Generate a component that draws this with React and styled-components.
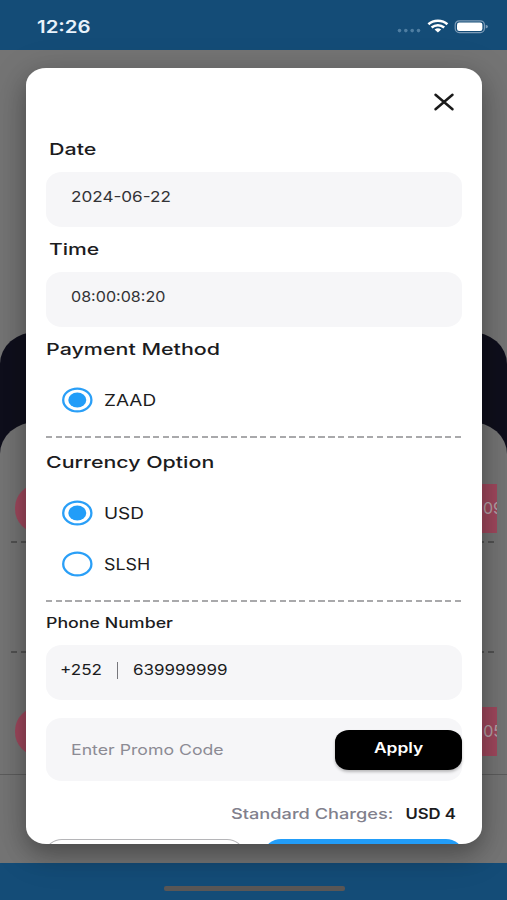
import styled, { createGlobalStyle } from 'styled-components';
import { useState } from 'react';

const GlobalStyle = createGlobalStyle`
  * {
    box-sizing: border-box;
  }
  body {
    margin: 0;
    font-family: Inter, 'Liberation Sans', sans-serif;
  }
`;

const Screen = styled.div`
  display: grid;
  width: 507px;
  height: 900px;
  overflow: hidden;
  background: #747474;
`;

const Page = styled.div`
  grid-area: 1 / 1;
  display: flex;
  flex-direction: column;
  height: 900px;
`;

const StatusBar = styled.header`
  display: flex;
  align-items: center;
  justify-content: space-between;
  flex: none;
  height: 50px;
  padding: 3px 18px 0 37px;
  background: #144c77;
`;

const StatusIcons = styled.div`
  display: flex;
`;

const Hero = styled.div`
  flex: none;
  height: 282px;
`;

const Panel = styled.div`
  flex: 1;
  padding-top: 90px;
  border-radius: 36px 36px 0 0 / 32px 32px 0 0;
  background: #0f0f1c;
`;

const Sheet = styled.div`
  display: flex;
  flex-direction: column;
  height: 441px;
  padding-top: 62px;
  border-radius: 36px 36px 0 0 / 32px 32px 0 0;
  background: #747474;
`;

const Slot = styled.div`
  display: flex;
  align-items: center;
  justify-content: flex-end;
  flex: none;
  height: 49px;
  margin: 0 10px 0 15px;
  padding-bottom: 2px;
  overflow: hidden;
  border-radius: 24px 0 0 24px;
  background: #9f485d;
  color: #b4a3a8;
  font-size: 16px;
`;

const SlotTime = styled.span`
  margin-right: -6px;
`;

const Gap = styled.div`
  flex: none;
  height: ${(p) => p.$height}px;
`;

const SheetLine = styled.div`
  flex: none;
  height: 1px;
  background: #5c5c5c;
`;

const BottomBar = styled.footer`
  display: flex;
  justify-content: center;
  flex: none;
  height: 37px;
  padding: 23px 0 0 1px;
  background: #144c77;
`;

const HomeIndicator = styled.div`
  width: 181px;
  height: 5px;
  border-radius: 2px;
  background: #5a5756;
`;

const Modal = styled.section`
  grid-area: 1 / 1;
  z-index: 1;
  display: flex;
  flex-direction: column;
  width: 456px;
  height: 776px;
  margin: 68px 0 0 26px;
  padding: 25px 20px 0;
  overflow: hidden;
  border-radius: 20px / 17px;
  background: #fff;
  box-shadow: 0 10px 22px rgba(0, 0, 0, 0.26), 0 8px 40px rgba(0, 0, 0, 0.16);
`;

const CloseButton = styled.button`
  display: flex;
  align-self: flex-end;
  flex: none;
  margin-right: 7px;
  padding: 0;
  border: 0;
  background: none;
`;

const Text = styled.span`
  display: block;
  color: ${(p) => p.$color || '#1c1c1e'};
  font-size: ${(p) => p.$size || 16.5}px;
  font-weight: ${(p) => p.$weight || 400};
  line-height: 20px;
  white-space: nowrap;
  transform: scaleX(${(p) => p.$stretch || 1.15});
  transform-origin: ${(p) => p.$origin || 'left'};
`;

const Heading = styled(Text).attrs({ as: 'h2' })`
  flex: none;
  margin: ${(p) => p.$margin};
`;

const Field = styled.div`
  display: flex;
  align-items: center;
  flex: none;
  height: ${(p) => p.$height || 55}px;
  padding: ${(p) => p.$padding || '0 0 6px 25px'};
  border-radius: 16px / 14px;
  background: #f6f6f8;
`;

const Option = styled.button`
  display: flex;
  align-items: center;
  flex: none;
  gap: 11px;
  height: 26px;
  margin-top: ${(p) => p.$top}px;
  padding: 0 0 0 16px;
  border: 0;
  background: none;
  font-family: inherit;
`;

const Separator = styled.span`
  width: 1px;
  height: 17px;
  margin: 1px 15px 0 21px;
  background: #77777c;
`;

const DashLine = styled.div`
  flex: none;
  height: 2px;
  margin: ${(p) => p.$margin || 0};
  background: repeating-linear-gradient(
    90deg,
    ${(p) => p.$color || '#a9a9ab'} 0 6.4px,
    transparent 6.4px 9.73px
  );
`;

const ApplyButton = styled.button`
  display: flex;
  align-items: center;
  justify-content: center;
  width: 127px;
  height: 40px;
  margin-left: auto;
  padding: 0 0 3px;
  border: 0;
  border-radius: 14px / 12px;
  background: #000;
  box-shadow: 0 2px 3px rgba(0, 0, 0, 0.25);
  font-family: inherit;
`;

const Charges = styled.div`
  display: flex;
  justify-content: space-between;
  flex: none;
  margin: 23px 6px 0 185px;
`;

const Actions = styled.div`
  display: flex;
  justify-content: space-between;
  flex: none;
  margin-top: 15px;
`;

const Action = styled.button`
  width: 197px;
  height: 44px;
  border: ${(p) => (p.$primary ? '0' : '1px solid #b5b5b8')};
  border-radius: 16px / 13px;
  background: ${(p) => (p.$primary ? '#229df8' : '#fff')};
`;

function Radio({ checked }) {
  return (
    <svg width="31" height="26" viewBox="0 0 31 26">
      <ellipse cx="15.3" cy="13" rx="14.1" ry="11.4" fill="none" stroke="#2a9ff7" strokeWidth="2.3" />
      {checked && <ellipse cx="15.3" cy="13" rx="9" ry="7.4" fill="#229df8" />}
    </svg>
  );
}

function StatusGlyphs() {
  return (
    <svg width="92" height="16" viewBox="0 0 92 16">
      <g fill="#4f7ea2">
        <circle cx="2.5" cy="11.6" r="1.8" />
        <circle cx="8.8" cy="11.6" r="1.8" />
        <circle cx="15.2" cy="11.6" r="1.8" />
        <circle cx="21.5" cy="11.6" r="1.8" />
      </g>
      <g fill="none" stroke="#fff" strokeWidth="2.6">
        <path d="M31.4 5.2C36.5 .6 45.3 .6 50.4 5.2" />
        <path d="M34.6 8.5C38.3 5.5 43.5 5.5 47.2 8.5" />
      </g>
      <path d="M37.6 10.4Q40.9 8.2 44.2 10.4L40.9 13.4Z" fill="#fff" />
      <rect x="58.2" y="1.8" width="29.2" height="11.8" rx="4" fill="none" stroke="#7d9cb8" strokeWidth="1.2" />
      <rect x="60" y="3.5" width="25.4" height="8.4" rx="2.2" fill="#fff" />
      <path d="M88.7 5.7Q91 6.2 91 7.6Q91 9 88.7 9.5Z" fill="#7d9cb8" />
    </svg>
  );
}

function App() {
  const [currency, setCurrency] = useState('USD');

  return (
    <Screen>
      <GlobalStyle />
      <Page>
        <StatusBar>
          <Text $color="#e9f2fb" $size={17} $weight={600} $stretch={1.2}>12:26</Text>
          <StatusIcons>
            <StatusGlyphs />
          </StatusIcons>
        </StatusBar>
        <Hero />
        <Panel>
          <Sheet>
            <Slot><SlotTime>09</SlotTime></Slot>
            <DashLine $color="#525252" $margin="8px 10px 0 11px" />
            <Gap $height={108} />
            <DashLine $color="#525252" $margin="0 10px 0 11px" />
            <Gap $height={54} />
            <Slot><SlotTime>05</SlotTime></Slot>
            <Gap $height={18} />
            <SheetLine />
          </Sheet>
        </Panel>
        <BottomBar>
          <HomeIndicator />
        </BottomBar>
      </Page>

      <Modal>
        <CloseButton aria-label="Close">
          <svg width="22" height="18" viewBox="0 0 22 18">
            <path d="M2.5 1.8L19.5 16.2M19.5 1.8L2.5 16.2" stroke="#1a1a1a" strokeWidth="2.5" strokeLinecap="round" />
          </svg>
        </CloseButton>

        <Heading $weight={500} $stretch={1.3} $margin="28px 0 13px 3px">Date</Heading>
        <Field>
          <Text $size={14.5} $stretch={1.18} $color="#333336">2024-06-22</Text>
        </Field>
        <Heading $weight={500} $stretch={1.28} $margin="12px 0 13px 3px">Time</Heading>
        <Field>
          <Text $size={14.5} $stretch={1.11} $color="#333336">08:00:08:20</Text>
        </Field>

        <Heading $weight={500} $stretch={1.3} $margin="12px 0 0">Payment Method</Heading>
        <Option $top={28}>
          <Radio checked />
          <Text>ZAAD</Text>
        </Option>
        <DashLine $margin="23px 0 0" />

        <Heading $weight={500} $stretch={1.295} $margin="14px 0 0">Currency Option</Heading>
        <Option $top={28} onClick={() => setCurrency('USD')}>
          <Radio checked={currency === 'USD'} />
          <Text>USD</Text>
        </Option>
        <Option $top={25} onClick={() => setCurrency('SLSH')}>
          <Radio checked={currency === 'SLSH'} />
          <Text $stretch={1.08}>SLSH</Text>
        </Option>
        <DashLine $margin="23px 0 0" />

        <Heading $size={14} $weight={500} $stretch={1.27} $margin="11px 0 12px">Phone Number</Heading>
        <Field $padding="0 0 5px 14px">
          <Text $size={14.5} $stretch={1.18}>+252</Text>
          <Separator />
          <Text $size={14.5} $stretch={1.17}>639999999</Text>
        </Field>

        <Gap $height={18} />
        <Field $height={63} $padding="0 0 0 25px">
          <Text $size={14.5} $stretch={1.22} $color="#8c8b94">Enter Promo Code</Text>
          <ApplyButton>
            <Text $size={14.5} $weight={600} $stretch={1.2} $color="#fff" $origin="center">Apply</Text>
          </ApplyButton>
        </Field>

        <Charges>
          <Text $size={14.5} $weight={500} $stretch={1.255} $color="#81808c">Standard Charges:</Text>
          <Text $size={14.5} $weight={600} $origin="right">USD 4</Text>
        </Charges>
        <Actions>
          <Action aria-label="Cancel" />
          <Action aria-label="Confirm" $primary />
        </Actions>
      </Modal>
    </Screen>
  );
}

export default App;
